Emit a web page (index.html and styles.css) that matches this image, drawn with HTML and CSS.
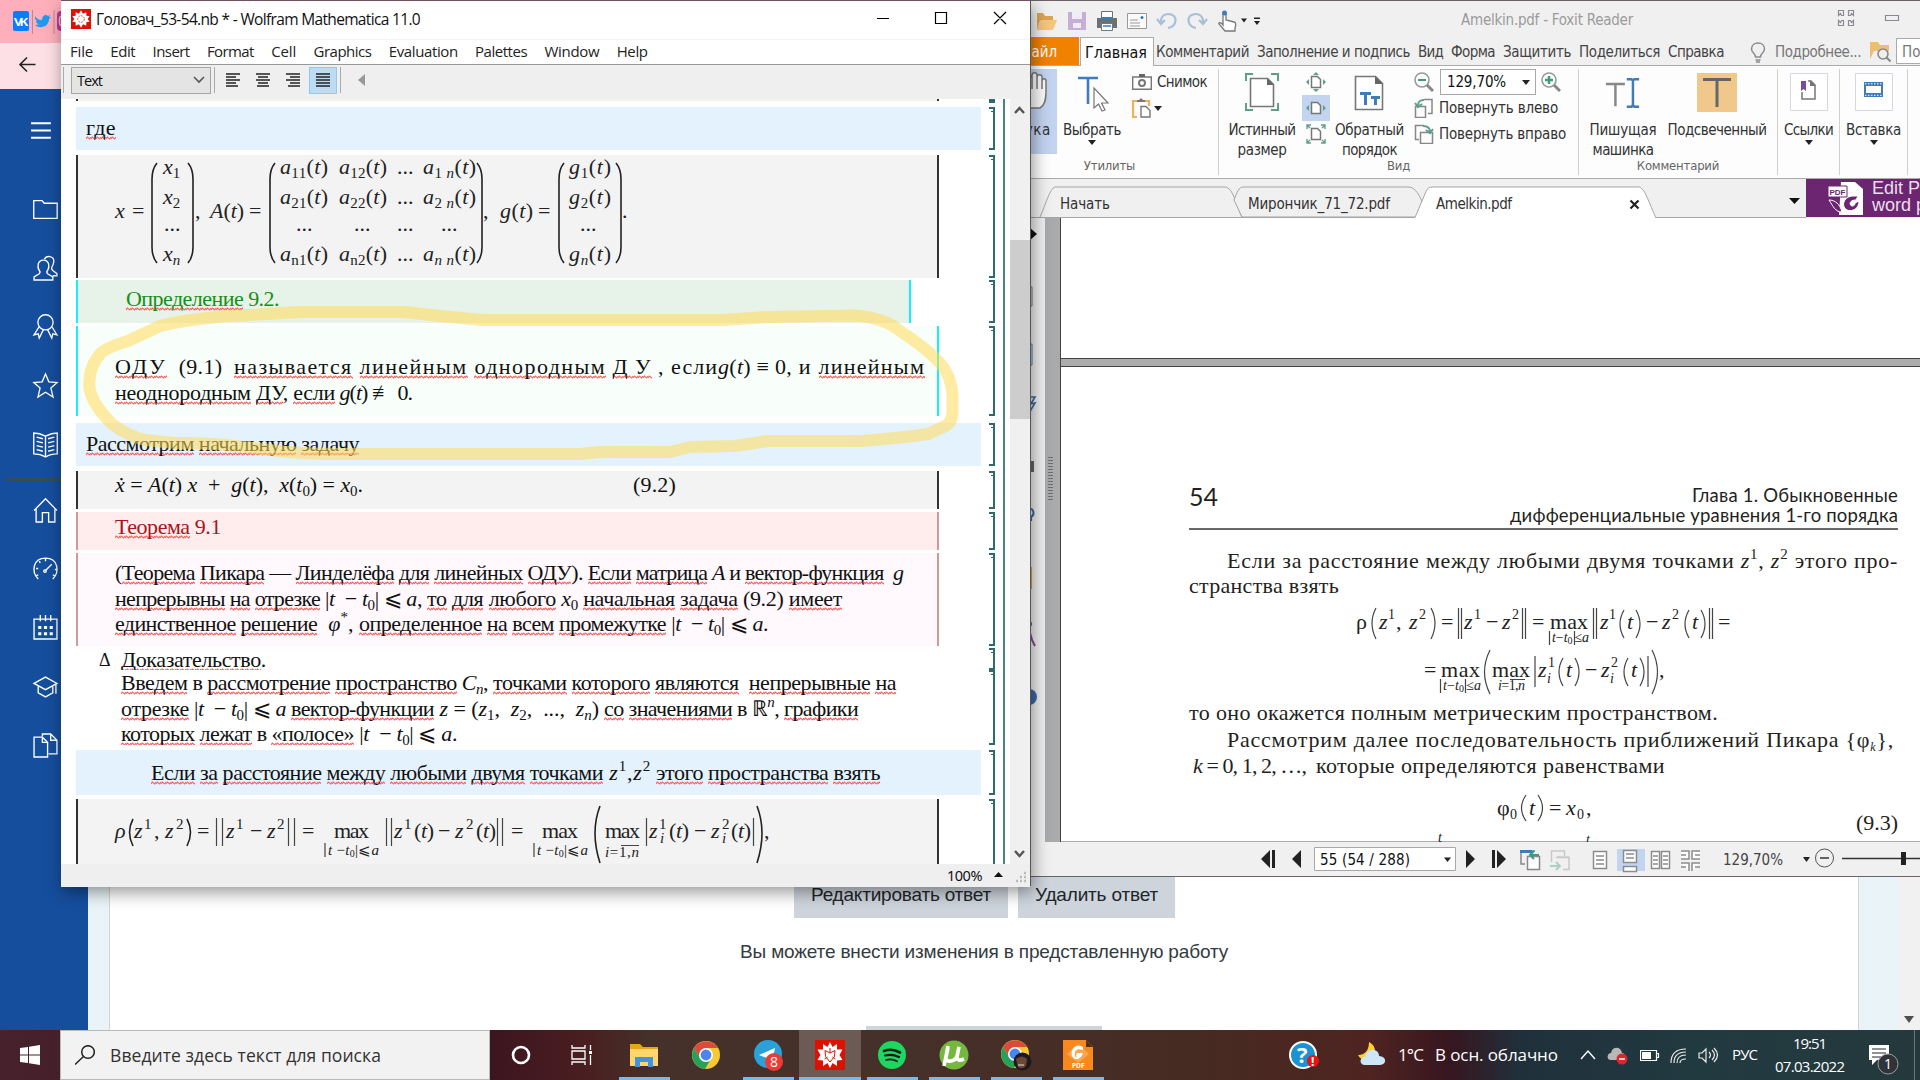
FILE: index.html
```html
<!DOCTYPE html>
<html lang="ru">
<head>
<meta charset="utf-8">
<title>Рабочий стол</title>
<link rel="stylesheet" href="styles.css">
</head>
<body>
<div class="desktop">

  <!-- Browser in the background -->
  <div class="browser">
    <div class="bookmarks">
      <svg width="61" height="43"><rect x="13" y="11" width="16" height="20" rx="2" fill="#0a7cff"/><text x="14" y="26" font-family="Lato" font-weight="900" font-size="12" fill="#fff" textLength="14">VK</text><path d="M32.500 10v24M54 10v24" stroke="#b98a92"/><path d="M35 25c3 0 4-1 4-1-2 0-3-2-3-3h1c-2-1-2-3-2-5 2 3 4 4 7 4 0-5 4-6 6-4l2-1-1 2 2 0-2 2c0 7-8 11-14 6z" fill="#1d9bf0"/><rect x="57" y="11" width="12" height="20" rx="4" fill="#c2379a"/><rect x="59.500" y="16" width="9" height="10" rx="3" fill="none" stroke="#fbc" stroke-width="1.500"/></svg>
    </div>
    <div class="addressbar"><svg width="61" height="45" fill="none" stroke="#222" stroke-width="1.600"><path d="M35.500 21.500H20M27 14.500l-7 7 7 7"/></svg></div>
    <div class="browser-body">
      <nav class="side">
        <svg class="hamb" viewBox="0 0 24 24"><path d="M2 5h19M2 12h19M2 19h19"/></svg>
        <svg viewBox="0 0 24 24"><path d="M.7 3.500h8l2 2.500h12.500v14.500H.7z"/></svg>
        <svg viewBox="0 0 24 24"><path d="M1 23v-3l5-3c1-1 1-2 0-3-2-3-2-10 4-10s6 7 4 10c-1 1-1 2 0 3l5 3v3zM11 3c2-4 9-3 9 2 0 2-1 4-2 6-.5 1 0 2 1 3l4 3v2h-4"/></svg>
        <svg viewBox="0 0 24 24"><circle cx="12" cy="8" r="7.300"/><path d="M6 12l-5 8 4-1 1 4 4-8M18 12l5 8-4-1-1 4-4-8"/></svg>
        <svg viewBox="0 0 24 24"><path d="M12 1l3.200 7.500 8 .7-6 5.300 2 8.500-7.200-4.500-7.200 4.500 2-8.500-6-5.300 8-.7z"/></svg>
        <svg viewBox="0 0 24 24"><path d="M12 4C8 2 4 1 .7 1v20c4 0 8 1 11.300 3 3.300-2 7.300-3 11.300-3V1C20 1 16 2 12 4v20M3.500 5l6 1.500M3.500 9l6 1.500M3.500 13l6 1.500M3.500 17l6 1.500M20.500 5l-6 1.500M20.500 9l-6 1.500M20.500 13l-6 1.500M20.500 17l-6 1.500"/></svg>
        <i class="rule"></i>
        <svg viewBox="0 0 24 24"><path d="M1 12L12 .8 23 12M3 10.500V23h6v-9h6v9h6V10.500"/></svg>
        <svg viewBox="0 0 24 24"><path d="M5 22C-2 15 0 2 12 2s14 13 7 20M12 14l6-6M3 12h2M6 5l1 1.500M12 2v3M21 13h2M5 18l-2 1M19 18l2 1"/><circle cx="11.500" cy="14.500" r="1.200"/></svg>
        <svg viewBox="0 0 24 24"><path d="M1 4h22v19H1zM7 0v6M12 0v6M17 0v6"/><path d="M5 12h3M10.500 12h3M16 12h3M5 18h3M10.500 18h3M16 18h3" stroke-width="3"/></svg>
        <svg viewBox="0 0 24 24"><path d="M1 9l11-6 11 6-11 6zM5 12v6l7 4 7-4v-6M22 10v9"/></svg>
        <svg viewBox="0 0 24 24"><path d="M1 4h8l5 5v14H1zM9 4v5h5M9 3V1h8l6 6v13h-8M17 1v6h6"/></svg>
      </nav>
      <div class="page">
        <div class="buttons"><span><b data-w="180">Редактировать ответ</b></span><span><b data-w="123">Удалить ответ</b></span></div>
        <p class="note"><b data-w="488">Вы можете внести изменения в представленную работу</b></p>
        <div class="lower-button"></div>
      </div>
      <div class="vscroll"><svg width="21" height="20"><path d="M5 6h10l-5 7z" fill="#505050"/></svg></div>
    </div>
  </div>

  <!-- Foxit Reader -->
  <section class="foxit">
    <header class="fx-title">
      <svg width="240" height="37" viewBox="1030 0 240 37">
        <path d="M1037 30V13h6l2 3h8v5l-13 0z" fill="#dca552"/><path d="M1037 30l4-10h16l-4 10z" fill="#f5c67e"/>
        <path d="M1068 12h18v18h-18z" fill="#c7aed6"/><path d="M1072 12h10v7h-10zM1073 23h8v5h-8z" fill="#f0ecf3"/>
        <path d="M1097 18h20v10h-20z" fill="#6d6f72"/><path d="M1101.500 11.500h11v8h-11z" fill="#fff" stroke="#6d6f72"/><path d="M1101 17h12v3h-12z" fill="#3f7cb8"/><path d="M1101.500 23.500h11v7h-11z" fill="#fff" stroke="#777"/><path d="M1103 26h8" stroke="#3f7cb8" stroke-width="1.500"/>
        <path d="M1127.500 13.500h19v15h-19z" fill="#fafafa" stroke="#999"/><path d="M1130 20h8M1130 23h10M1130 26h10" stroke="#999"/><circle cx="1142" cy="17.500" r="1.500" fill="#37b"/>
        <path d="M1168 28c9-1 11-14 0-14-5 0-7 4-7 8M1157 19l4 5 4-4M1196 28c-9-1-11-14 0-14 5 0 7 4 7 8M1207 19l-4 5-4-4" fill="none" stroke="#a9bfd9" stroke-width="2.200"/>
        <path d="M1223 25V14c0-2 3-2 3 0v6l8 2c2 0 2 3 1 6v3h-10l-6-7c-1-2 2-2 4 1z" fill="#fff" stroke="#777" stroke-width="1.300"/><circle cx="1224.500" cy="13" r="2.500" fill="#3f7cb8"/>
        <path d="M1241 18.500h6l-3 4zM1254 21h6l-3 4zM1254 17.500h6v1.500h-6z" fill="#222"/>
      </svg>
      <b class="fx-name" data-w="172">Amelkin.pdf - Foxit Reader</b>
      <svg class="fx-ctl" width="83" height="37" viewBox="1837 0 83 37" fill="none" stroke="#8a8a92" stroke-width="1.200"><path d="M1838.500 10.500h5v5h-2l-1-2-2 2zM1848.500 10.500h5v5l-2-2-1 2h-2zM1838.500 20.500l2 2 1-2h2v5h-5zM1848.500 20.500h2l1 2 2-2v5h-5zM1885.500 15.500h13v5h-13z"/></svg>
    </header>
    <nav class="fx-menu">
      <span class="file"><b data-w="37">Файл</b></span><span class="home"><b data-w="62">Главная</b></span>
      <span class="items"><b data-w="93">Комментарий</b><b data-w="153">Заполнение и подпись</b><b data-w="25">Вид</b><b data-w="44">Форма</b><b data-w="68">Защитить</b><b data-w="81">Поделиться</b><b data-w="56">Справка</b></span>
      <svg class="bulb" width="17" height="21" fill="none" stroke="#8a8a8a" stroke-width="1.500"><path d="M5.500 15c0-4-4-4-4-8 0-8 13-8 13 0 0 4-4 4-4 8zM5.500 18h5M6 20h4"/></svg>
      <b class="grey" data-w="86">Подробнее...</b>
      <svg class="find" width="21" height="20"><path d="M0 17V0h8l2 3h9v6H4z" fill="#edbd75"/><circle cx="13" cy="12" r="5" fill="#eee" stroke="#888" stroke-width="1.600"/><path d="M16.500 15.500l4 4" stroke="#888" stroke-width="2"/></svg>
      <span class="searchbox">Поиск</span>
    </nav>
    <div class="ribbon">
      <div class="grp g-tools">
        <div class="cmd hand"><svg viewBox="0 0 34 40"><path d="M8 22L2 18c-3-1-3 2-1 4l9 14h14c5-3 6-8 6-16V9c0-3-4-3-4 0v8V5c0-3-5-3-5 0v12V3c0-3-5-3-5 0v14V6c0-3-5-3-5 0v19" fill="#fafafa" stroke="#777" stroke-width="1.500"/></svg><b data-w="35">Рука</b></div>
        <div class="cmd sel"><svg viewBox="0 0 34 40"><path d="M3 6h20M13 6v26" fill="none" stroke="#3f7cb8" stroke-width="2.600"/><path d="M19 16v20l4.500-4 3.500 7 3-1-3.500-7H33z" fill="#fff" stroke="#777" stroke-width="1.200"/></svg><b data-w="58">Выбрать</b><i class="tri"></i></div>
        <div class="stack snap"><div><svg width="20" height="16" viewBox="0 0 20 16"><path d="M.7 3h18.600v12.300H.7z" fill="#fff" stroke="#777" stroke-width="1.400"/><path d="M7 0h6v3H7z" fill="#666"/><circle cx="10" cy="9" r="3" fill="none" stroke="#777" stroke-width="2"/></svg><b data-w="50">Снимок</b></div><div class="paste"><svg width="20" height="20"><path d="M5 19H1V3h16v5" fill="none" stroke="#eeb05b" stroke-width="2.200"/><path d="M5 4V2h2l2-2 2 2h2v2z" fill="#777"/><path d="M9 8.500h5l4 4V19H9z" fill="#fff" stroke="#777" stroke-width="1.400"/></svg><i class="tri"></i></div></div>
        <em>Утилиты</em>
      </div>
      <div class="grp g-view">
        <div class="cmd real"><svg viewBox="0 0 34 40"><path d="M1 9V2h7M26 2h7v7M33 31v7h-7M8 38H1v-7" fill="none" stroke="#5da089" stroke-width="2"/><path d="M5.500 6.500h17l6 6v22h-23z" fill="#fff" stroke="#777" stroke-width="1.600"/><path d="M22 6v7h7z" fill="#666"/></svg><b data-w="67">Истинный</b><b data-w="49">размер</b></div>
        <div class="stack fits">
          <div><svg width="20" height="20" fill="none"><path d="M5.500 4.500h6l3 3v8h-9z" fill="#fff" stroke="#777" stroke-width="1.500"/><path d="M7 3l3-3 3 3zM7 17l3 3 3-3zM3 7l-3 3 3 3zM17 7l3 3-3 3z" fill="#5da089"/></svg></div>
          <div class="on"><svg width="20" height="20" fill="none"><path d="M5.500 4.500h6l3 3v8h-9z" fill="#fff" stroke="#777" stroke-width="1.500"/><path d="M3 7l-3 3 3 3zM17 7l3 3-3 3z" fill="#5da089"/></svg></div>
          <div><svg width="20" height="20" fill="none"><path d="M5.500 4.500h6l3 3v8h-9z" fill="#fff" stroke="#777" stroke-width="1.500"/><path d="M1 5V1h4M1 1l3 3M15 1h4v4M19 1l-3 3M1 15v4h4M1 19l3-3M15 19h4v-4M19 19l-3-3" stroke="#5da089" stroke-width="1.400"/></svg></div>
        </div>
        <div class="cmd rev"><svg viewBox="0 0 34 40"><path d="M3.500 4.500h20l7 7v26h-27z" fill="#fff" stroke="#777" stroke-width="1.600"/><path d="M23 4v8h8z" fill="#666"/><path d="M8 21.500h11M13.500 21v12M19 25.500h9M23.500 25v8" stroke="#3f7cb8" stroke-width="3"/></svg><b data-w="69">Обратный</b><b data-w="55">порядок</b></div>
        <div class="stack zooms">
          <div><svg width="20" height="20" fill="none"><circle cx="8" cy="8" r="7" stroke="#999" stroke-width="1.600"/><path d="M13 13l6 6" stroke="#888" stroke-width="3"/><path d="M4 8h8" stroke="#3f9b78" stroke-width="2"/></svg><span class="combo"><b data-w="59">129,70%</b><i class="tri"></i></span><svg width="20" height="20" fill="none"><circle cx="8" cy="8" r="7" stroke="#999" stroke-width="1.600"/><path d="M13 13l6 6" stroke="#888" stroke-width="3"/><path d="M4 8h8M8 4v8" stroke="#3f9b78" stroke-width="2.500"/></svg></div>
          <div><svg width="20" height="20" fill="none"><path d="M10 1.500h8v14h-4M1.500 8.500h10v11h-10z" stroke="#888" stroke-width="1.500"/><path d="M10 2C5 2 4 4 4 8M1 5l3 4 4-3" stroke="#5da089" stroke-width="2"/></svg><b data-w="119">Повернуть влево</b></div>
          <div><svg width="20" height="20" fill="none"><path d="M10 1.500H1.500v14H5M6.500 8.500h12v11h-12z" stroke="#888" stroke-width="1.500"/><path d="M9 2c5 0 7 2 7 6M12 6l4 3 3-4" stroke="#5da089" stroke-width="2"/></svg><b data-w="127">Повернуть вправо</b></div>
        </div>
        <em>Вид</em>
      </div>
      <div class="grp g-comment">
        <div class="cmd type"><svg viewBox="0 0 38 40"><path d="M1 11.500h20M11 11v24" stroke="#888" stroke-width="2.600"/><path d="M23 6.500h5l1.500 1.500 1.500-1.500h5M23 35.500h5l1.500-1.500 1.500 1.500h5M29.500 7v28" fill="none" stroke="#3f7cb8" stroke-width="2.600"/></svg><b data-w="67">Пишущая</b><b data-w="61">машинка</b></div>
        <div class="cmd mark"><svg viewBox="0 0 40 40"><path d="M0 1h40v39H0z" fill="#f1c88c"/><path d="M6 7.500h28M20 7v28" stroke="#666" stroke-width="3"/></svg><b data-w="99">Подсвеченный</b></div>
        <em>Комментарий</em>
      </div>
      <div class="grp g-links"><div class="cmd"><svg viewBox="0 0 38 40"><path d="M.5 1.500h37v37H.5z" fill="#fff" stroke="#d3d8e2"/><path d="M11 9h5v10l-2.500-2-2.500 2z" fill="#7a4a9c"/><path d="M18 9h3l4 4v14H12v-7" fill="none" stroke="#777" stroke-width="1.500"/><path d="M20 8v6h6z" fill="#777"/></svg><b data-w="49">Ссылки</b><i class="tri"></i></div></div>
      <div class="grp g-insert"><div class="cmd"><svg viewBox="0 0 38 40"><path d="M.5 1.500h37v37H.5z" fill="#fff" stroke="#d3d8e2"/><path d="M9 10h19v15H9z" fill="#3f7cb8"/><path d="M11 14h15v7H11z" fill="#fff"/><path d="M10 11.800h17M10 23.300h17" stroke="#fff" stroke-dasharray="1.500 1.500"/></svg><b data-w="55">Вставка</b><i class="tri"></i></div></div>
    </div>
    <div class="doctabs">
      <svg width="806" height="39" viewBox="1000 179 806 39">
        <g fill="#f0f0f0" stroke="#a5a5a5"><path d="M1040 217c5-11 10-29 15-30h170c8 0 12 20 17 30"/><path d="M1234 200c3-8 5-13 9-13h166c6 0 11 9 14 17l-5 13h-176z"/><path d="M1000 217.500h806"/><path d="M1415 217.500l11-26c1-3 3-4.500 7-4.500h206c6 0 13 24 17 30.500" fill="#fff"/></g>
        <path d="M1415.500 217.500h239" stroke="#fff"/>
        <g font-size="15" fill="#333"><text x="1060" y="209" textLength="50">Начать</text><text x="1248" y="209" textLength="142">Мирончик_71_72.pdf</text><text x="1436" y="209" textLength="76">Amelkin.pdf</text></g>
        <path d="M1630.500 200.500l8 8M1638.500 200.500l-8 8" stroke="#222" stroke-width="2.200"/><path d="M1789 198h11l-5.500 6z" fill="#111"/>
      </svg>
      <div class="ad"><svg width="36" height="36" viewBox="0 0 36 36"><path d="M14 2h14l8 7v26H12z" fill="#fff"/><path d="M1 6h19v11H1z" fill="#fff" stroke="#6c2570"/><text x="2.500" y="14.500" font-size="8" font-weight="700" fill="#6c2570" textLength="16">PDF</text><path d="M2 20c6 0 11 4 13 12-7 0-9-6-13-12zM20 30c-6-3-4-13 5-14l6 0-2 4c-7 0-7 5-4 6 2 0 3-1 3-3l4-2c0 8-7 11-12 9z" fill="#6c2570" stroke="#fff"/></svg><span>Edit PDF<br>word pro</span></div>
    </div>
    <div class="docview">
      <div class="navpanel"><svg width="45" height="624" viewBox="1000 218 45 624"><path d="M1029 227l8 7-8 7z" fill="#111"/><path d="M1022 287h10v19h-10z" fill="none" stroke="#777"/><path d="M1022 344h10v21h-10z" fill="none" stroke="#4a7ab0"/><path d="M1026 397h9l-6 10M1026 405l9-2-6 10" fill="none" stroke="#3b6aa5" stroke-width="1.600"/><path d="M1022 461h12v11h-4l-3 5z" fill="#666"/><path d="M1028 509c6-2 7 6 3 8v4" fill="none" stroke="#3b6aa5" stroke-width="2"/><path d="M1022 567h10v22h-10z" fill="#dba64e"/><circle cx="1029" cy="624" r="3" fill="#3b6aa5"/><path d="M1028 640l2-7 2 7 3 6M1029 642l-2 4" stroke="#7a4a9c" fill="none" stroke-width="2"/><circle cx="1029" cy="697" r="8" fill="#3b6aa5"/></svg></div>
      <div class="gutter"><i></i></div>
      <div class="sheets">
        <div class="sheet first"></div>
        <article class="sheet">
          <header><span class="num">54</span><span class="chap"><b data-w="206">Глава 1. Обыкновенные</b><br><b data-w="388">дифференциальные уравнения 1-го порядка</b></span></header>
          <p class="l1"><b data-w="671">Если за расстояние между любыми двумя точками <i>z</i><sup>1</sup>, <i>z</i><sup>2</sup> этого про-</b></p>
          <p class="l2"><b data-w="150">странства взять</b></p>
          <svg class="eq" width="709" height="104" viewBox="1189 601 709 104">
            <g class="m"><text x="1356" y="630">ρ</text><text x="1379" y="630" class="i">z</text><text x="1396" y="630">,</text><text x="1409" y="630" class="i">z</text><text x="1441" y="630">=</text><text x="1464" y="630" class="i">z</text><text x="1486" y="630">−</text><text x="1502" y="630" class="i">z</text><text x="1532" y="630">=</text><text x="1550" y="630" textLength="38">max</text><text x="1600" y="630" class="i">z</text><text x="1627" y="630" class="i">t</text><text x="1646" y="630">−</text><text x="1662" y="630" class="i">z</text><text x="1692" y="630" class="i">t</text><text x="1718" y="630">=</text>
            <text x="1424" y="678">=</text><text x="1441" y="678" textLength="39">max</text><text x="1492" y="678" textLength="38">max</text><text x="1538" y="678" class="i">z</text><text x="1566" y="678" class="i">t</text><text x="1585" y="678">−</text><text x="1601" y="678" class="i">z</text><text x="1631" y="678" class="i">t</text><text x="1659" y="678">,</text></g>
            <g class="x"><text x="1388" y="620">1</text><text x="1419" y="620">2</text><text x="1474" y="620">1</text><text x="1512" y="620">2</text><text x="1609" y="620">1</text><text x="1672" y="620">2</text><text x="1548" y="668">1</text><text x="1611" y="668">2</text><text x="1547" y="684" class="i">i</text><text x="1610" y="684" class="i">i</text>
            <text x="1552" y="643" textLength="37"><tspan class="i">t</tspan>−<tspan class="i">t</tspan><tspan class="xx" dy="2">0</tspan><tspan dy="-2" dx="2">≤</tspan><tspan class="i">a</tspan></text><text x="1443" y="691" textLength="38"><tspan class="i">t</tspan>−<tspan class="i">t</tspan><tspan class="xx" dy="2">0</tspan><tspan dy="-2" dx="2">≤</tspan><tspan class="i">a</tspan></text><text x="1498" y="691" textLength="27"><tspan class="i">i</tspan>=1,<tspan class="i">n</tspan></text></g>
            <path class="bar" d="M1376 609q-8 15 0 31M1431 609q8 15 0 31M1458.500 609v31M1461.500 609v31M1522.500 609v31M1525.500 609v31M1593.500 609v31M1596.500 609v31M1624 611q-8 14 0 28M1636 611q8 14 0 28M1689 611q-8 14 0 28M1701 611q8 14 0 28M1709.500 609v31M1712.500 609v31M1549.500 632v14M1574.500 632v14M1440.500 680v14M1465.500 680v14M1490 651q-11 22 0 44M1652 651q11 22 0 44M1535 657v31M1648 657v31M1563 659q-8 14 0 28M1575 659q8 14 0 28M1628 659q-8 14 0 28M1640 659q8 14 0 28M1510 680.500h15"/>
          </svg>
          <p class="l3"><b data-w="529">то оно окажется полным метрическим пространством.</b></p>
          <p class="l4"><b data-w="667">Рассмотрим далее последовательность приближений Пикара {φ<sub><i>k</i></sub>},</b></p>
          <p class="l5"><b data-w="113"><i>k</i> = 0, 1, 2, …,</b><b data-w="349">которые определяются равенствами</b></p>
          <svg class="eq last" width="709" height="52" viewBox="1189 792 709 52"><g class="m"><text x="1497" y="816">φ</text><text x="1529" y="816" class="i">t</text><text x="1549" y="816">=</text><text x="1566" y="816" class="i">x</text><text x="1586" y="816">,</text><text x="1856" y="831" textLength="42">(9.3)</text></g><g class="x"><text x="1510" y="820">0</text><text x="1577" y="820">0</text><text x="1438" y="843" class="i">t</text><text x="1586" y="845" class="i">t</text></g><path class="bar" d="M1526 796q-9 13 0 26M1538 796q9 13 0 26"/></svg>
        </article>
      </div>
    </div>
    <footer class="fx-foot">
      <svg width="920" height="34" viewBox="1000 842 920 34">
        <g fill="#222"><path d="M1270 850v18l-9-9zM1272 850h3v18h-3zM1301 850v18l-9-9zM1466 850v18l9-9zM1492 850h3v18h-3zM1497 850v18l9-9z"/></g>
        <path d="M1314.500 847.500h141v23h-141z" fill="#fff" stroke="#a8a8a8"/><text x="1320" y="865" font-size="15" fill="#111" textLength="90">55 (54 / 288)</text><path d="M1444 857.500h7l-3.500 4.500z" fill="#222"/>
        <g fill="none" stroke="#888" stroke-width="1.500"><path d="M1525 864h-4v-13h14" /><path d="M1527.500 856.500h12v13h-12z" fill="#fff"/><path d="M1520 851.500h12" stroke="#3f7cb8" stroke-width="3"/><path d="M1539 855h-8M1534 851l-4 4 4 4" stroke="#3f9b78" stroke-width="2"/></g>
        <g fill="none" stroke="#c8c8c8" stroke-width="1.500"><path d="M1551.500 862v-11h13v5M1556 857.500h13v12h-6M1557 857h12" /><path d="M1550 866h9M1556 862l4 4-4 4" stroke="#acd0c4" stroke-width="2"/></g>
        <path d="M1617 849h28v22h-28z" fill="#c3d4f1"/>
        <g fill="#fff" stroke="#8c8c8c" stroke-width="1.500"><path d="M1593.500 851.500h13v17h-13zM1623.500 850.500h13v12h-13zM1623.500 866.500h13v5h-13zM1651.500 851.500h8v17h-8zM1661.500 851.500h8v17h-8z"/><path d="M1596 856h8M1596 860h8M1596 864h8M1626 854h8M1626 858h8M1653 856h5M1653 860h5M1653 864h5M1663 856h5M1663 860h5M1663 864h5M1681 851h8v8h-8M1700 851h-8v8h8M1681 863h8v8M1700 863h-8v8M1681 855h5M1700 855h-5M1681 867h5M1700 867h-5"/></g>
        <text x="1723" y="865" font-size="15" fill="#444" textLength="60">129,70%</text><path d="M1803 857h7l-3.500 5z" fill="#222"/><circle cx="1824.500" cy="858" r="9" fill="none" stroke="#555"/><path d="M1820 858h9" stroke="#333" stroke-width="1.500"/><path d="M1842 858.500h78" stroke="#333" stroke-width="1.500"/><path d="M1901 852h5v13h-5z" fill="#222"/>
      </svg>
    </footer>
  </section>

  <!-- Wolfram Mathematica -->
  <section class="wolfram">
    <header class="wf-title">
      <svg width="20" height="20" viewBox="0 0 30 30"><path d="M0 0h30v30H0z" fill="#dd1100"/><path d="M15 2l3 5 5-2 0 5 5 1-3 4 3 4-5 1 0 5-5-2-3 5-3-5-5 2 0-5-5-1 3-4-3-4 5-1 0-5 5 2z" fill="#fff"/><circle cx="15" cy="15" r="5" fill="none" stroke="#dd1100" stroke-dasharray="3 1.500"/></svg>
      <b data-w="324">Головач_53-54.nb * - Wolfram Mathematica 11.0</b>
      <svg class="winctl" width="148" height="38" viewBox="877 1 148 38" fill="none" stroke="#000" stroke-width="1.200"><path d="M877 19.500h12M935.500 13.500h11v11h-11zM994 13l12 12M1006 13l-12 12"/></svg>
    </header>
    <nav class="wf-menu"><b data-w="23">File</b><b data-w="25">Edit</b><b data-w="37">Insert</b><b data-w="47">Format</b><b data-w="25">Cell</b><b data-w="58">Graphics</b><b data-w="69">Evaluation</b><b data-w="52">Palettes</b><b data-w="55">Window</b><b data-w="31">Help</b></nav>
    <div class="wf-tools">
      <i class="sep"></i><span class="style"><b data-w="25">Text</b><svg width="12" height="8" fill="none" stroke="#555" stroke-width="1.600"><path d="M1 1l5 5 5-5"/></svg></span><i class="sep"></i>
      <span class="al"><svg viewBox="0 0 14 15"><path d="M0 1h14M0 4h10M0 7h14M0 10h10M0 13h12"/></svg></span><span class="al"><svg viewBox="0 0 14 15"><path d="M0 1h14M2 4h10M0 7h14M2 10h10M1 13h12"/></svg></span><span class="al"><svg viewBox="0 0 14 15"><path d="M0 1h14M4 4h10M0 7h14M4 10h10M2 13h12"/></svg></span><span class="al on"><svg viewBox="0 0 14 15"><path d="M0 1h14M0 4h14M0 7h14M0 10h14M0 13h14"/></svg></span>
      <i class="sep"></i><svg class="left" width="8" height="12"><path d="M7 0v12L0 6z" fill="#999"/></svg>
    </div>
    <div class="nbwrap">
      <div class="notebook">
        <div class="row r0"><div class="cell ink"></div><i class="brk"></i></div>
        <div class="row r1"><div class="cell blue"><p><b data-w="30"><u>где</u></b></p></div><i class="brk"></i></div>
        <div class="row r2"><div class="cell ink">
          <svg class="mx" width="858" height="123" viewBox="78 155 858 123">
            <g class="m"><text x="115" y="218" class="i">x</text><text x="132" y="218">=</text><text x="195" y="218">,</text><text x="210" y="218" textLength="34"><tspan class="i">A</tspan>(<tspan class="i">t</tspan>)</text><text x="249" y="218">=</text><text x="483" y="218">,</text><text x="500" y="218" textLength="33"><tspan class="i">g</tspan>(<tspan class="i">t</tspan>)</text><text x="538" y="218">=</text><text x="622" y="218">.</text>
            <text x="163" y="174"><tspan class="i">x</tspan><tspan class="x" dy="4">1</tspan></text><text x="163" y="204"><tspan class="i">x</tspan><tspan class="x" dy="4">2</tspan></text><text x="164" y="231">...</text><text x="163" y="261"><tspan class="i">x</tspan><tspan class="x i" dy="4">n</tspan></text>
            <text x="280" y="174" textLength="48"><tspan class="i">a</tspan><tspan class="x" dy="4">11</tspan><tspan dy="-4">(</tspan><tspan class="i">t</tspan>)</text><text x="339" y="174" textLength="48"><tspan class="i">a</tspan><tspan class="x" dy="4">12</tspan><tspan dy="-4">(</tspan><tspan class="i">t</tspan>)</text><text x="397" y="174">...</text><text x="423" y="174" textLength="53"><tspan class="i">a</tspan><tspan class="x" dy="4">1 </tspan><tspan class="x i">n</tspan><tspan dy="-4">(</tspan><tspan class="i">t</tspan>)</text>
            <text x="280" y="204" textLength="48"><tspan class="i">a</tspan><tspan class="x" dy="4">21</tspan><tspan dy="-4">(</tspan><tspan class="i">t</tspan>)</text><text x="339" y="204" textLength="48"><tspan class="i">a</tspan><tspan class="x" dy="4">22</tspan><tspan dy="-4">(</tspan><tspan class="i">t</tspan>)</text><text x="397" y="204">...</text><text x="423" y="204" textLength="53"><tspan class="i">a</tspan><tspan class="x" dy="4">2 </tspan><tspan class="x i">n</tspan><tspan dy="-4">(</tspan><tspan class="i">t</tspan>)</text>
            <text x="296" y="231">...</text><text x="354" y="231">...</text><text x="397" y="231">...</text><text x="441" y="231">...</text>
            <text x="280" y="261" textLength="48"><tspan class="i">a</tspan><tspan class="x" dy="4">n1</tspan><tspan dy="-4">(</tspan><tspan class="i">t</tspan>)</text><text x="339" y="261" textLength="48"><tspan class="i">a</tspan><tspan class="x" dy="4">n2</tspan><tspan dy="-4">(</tspan><tspan class="i">t</tspan>)</text><text x="397" y="261">...</text><text x="423" y="261" textLength="53"><tspan class="i">a</tspan><tspan class="x i" dy="4">n n</tspan><tspan dy="-4">(</tspan><tspan class="i">t</tspan>)</text>
            <text x="569" y="174" textLength="42"><tspan class="i">g</tspan><tspan class="x" dy="4">1</tspan><tspan dy="-4">(</tspan><tspan class="i">t</tspan>)</text><text x="569" y="204" textLength="42"><tspan class="i">g</tspan><tspan class="x" dy="4">2</tspan><tspan dy="-4">(</tspan><tspan class="i">t</tspan>)</text><text x="580" y="231">...</text><text x="569" y="261" textLength="42"><tspan class="i">g</tspan><tspan class="x i" dy="4">n</tspan><tspan dy="-4">(</tspan><tspan class="i">t</tspan>)</text></g>
            <path class="par" d="M157 163q-5 6-5 16v68q0 10 5 16M188 163q5 6 5 16v68q0 10-5 16M275 163q-5 6-5 16v68q0 10 5 16M477 163q5 6 5 16v68q0 10-5 16M564 163q-5 6-5 16v68q0 10 5 16M616 163q5 6 5 16v68q0 10-5 16"/>
          </svg></div><i class="brk"></i></div>
        <div class="row r3"><div class="cell green"><p><b data-w="153"><u>Определение</u> 9.2.</b></p></div><i class="brk"></i></div>
        <div class="row r4"><div class="cell mint"><p><b data-w="52"><u>ОДУ</u></b><b data-w="67">  (9.1)  </b><b data-w="372"><u>называется</u> <u>линейным</u> <u>однородным</u></b><b data-w="65"> <u>Д У</u> , </b><b data-w="47">если</b><b data-w="74"><i>g</i>(<i>t</i>) ≡ 0,</b><b data-w="133"> и <u>линейным</u></b></p><p><b data-w="220"><u>неоднородным</u> <u>ДУ</u>, <u>если</u></b><b data-w="77"> <i>g</i>(<i>t</i>) ≢ 0.</b></p></div><i class="brk"></i></div>
        <div class="row r5"><div class="cell blue"><p><b data-w="273"><u>Рассмотрим</u> <u>начальную</u> <u>задачу</u></b></p></div><i class="brk"></i></div>
        <div class="row r6"><div class="cell ink"><p><b data-w="248"><i>ẋ</i> = <i>A</i>(<i>t</i>) <i>x</i>  +  <i>g</i>(<i>t</i>),  <i>x</i>(<i>t</i><sub>0</sub>) = <i>x</i><sub>0</sub>.</b><b class="eqno" data-w="43">(9.2)</b></p></div><i class="brk"></i></div>
        <div class="row r7"><div class="cell pink"><p><b data-w="106"><u>Теорема</u> 9.1</b></p></div><i class="brk"></i></div>
        <div class="row r8"><div class="cell rose"><p><b data-w="516">(<u>Теорема</u> <u>Пикара</u> — <u>Линделёфа</u> <u>для</u> <u>линейных</u> <u>ОДУ</u>). <u>Если</u></b><b data-w="272"> <u>матрица</u> <i>A</i> и <u>вектор-функция</u>  <i>g</i></b></p><p><b data-w="205"><u>непрерывны</u> <u>на</u> <u>отрезке</u></b><b data-w="107"> |<i>t</i>  − <i>t</i><sub>0</sub>| ⩽ <i>a</i>, </b><b data-w="415"><u>то</u> <u>для</u> <u>любого</u> <i>x</i><sub>0</sub> <u>начальная</u> <u>задача</u> (9.2) <u>имеет</u></b></p><p><b data-w="202"><u>единственное</u> <u>решение</u></b><b data-w="42">  <i>φ</i><sup>*</sup>, </b><b data-w="307"><u>определенное</u> <u>на</u> <u>всем</u> <u>промежутке</u></b><b data-w="102"> |<i>t</i>  − <i>t</i><sub>0</sub>| ⩽ <i>a</i>.</b></p></div><i class="brk"></i></div>
        <div class="row r9"><div class="cell plain"><p><span class="delta">Δ</span><b data-w="145"><u>Доказательство</u>.</b></p></div><i class="brk"></i></div>
        <div class="row r10"><div class="cell plain"><p><b data-w="367"><u>Введем</u> в <u>рассмотрение</u> <u>пространство</u> <i>C</i><sub><i>n</i></sub>,</b><b data-w="408"> <u>точками</u> <u>которого</u> <u>являются</u>  <u>непрерывные</u> <u>на</u></b></p><p><b data-w="68"><u>отрезке</u></b><b data-w="102"> |<i>t</i>  − <i>t</i><sub>0</sub>| ⩽ <i>a</i> </b><b data-w="143"><u>вектор-функции</u></b><b data-w="165"> <i>z</i> = (<i>z</i><sub>1</sub>,  <i>z</i><sub>2</sub>,  ...,  <i>z</i><sub><i>n</i></sub>)</b><b data-w="259"> <u>со</u> <u>значениями</u> в ℝ<sup><i>n</i></sup>, <u>графики</u></b></p><p><b data-w="233"><u>которых</u> <u>лежат</u> в <u>«полосе»</u></b><b data-w="103"> |<i>t</i>  − <i>t</i><sub>0</sub>| ⩽ <i>a</i>.</b></p></div><i class="brk"></i></div>
        <div class="row r11"><div class="cell blue"><p><b data-w="452"><u>Если</u> <u>за</u> <u>расстояние</u> <u>между</u> <u>любыми</u> <u>двумя</u> <u>точками</u></b><b data-w="48"> <i>z</i><sup>1</sup>,<i>z</i><sup>2</sup></b><b data-w="229"> <u>этого</u> <u>пространства</u> <u>взять</u></b></p></div><i class="brk"></i></div>
        <div class="row r12"><div class="cell ink">
          <svg class="mx" width="858" height="65" viewBox="78 799 858 65">
            <g class="m"><text x="115" y="838" class="i">ρ</text><text x="134" y="838" class="i">z</text><text x="154" y="838">,</text><text x="165" y="838" class="i">z</text><text x="197" y="838">=</text><text x="226" y="838" class="i">z</text><text x="250" y="838">−</text><text x="267" y="838" class="i">z</text><text x="302" y="838">=</text><text x="334" y="838" textLength="35">max</text><text x="394" y="838" class="i">z</text><text x="414" y="838" textLength="20">(<tspan class="i">t</tspan>)</text><text x="438" y="838">−</text><text x="455" y="838" class="i">z</text><text x="476" y="838" textLength="20">(<tspan class="i">t</tspan>)</text><text x="511" y="838">=</text><text x="542" y="838" textLength="36">max</text><text x="605" y="838" textLength="35">max</text><text x="649" y="838" class="i">z</text><text x="669" y="838" textLength="20">(<tspan class="i">t</tspan>)</text><text x="694" y="838">−</text><text x="711" y="838" class="i">z</text><text x="731" y="838" textLength="20">(<tspan class="i">t</tspan>)</text><text x="764" y="838">,</text></g>
            <g class="x"><text x="144" y="829">1</text><text x="176" y="829">2</text><text x="236" y="829">1</text><text x="277" y="829">2</text><text x="404" y="829">1</text><text x="466" y="829">2</text><text x="659" y="829">1</text><text x="722" y="829">2</text><text x="660" y="843" class="i">i</text><text x="722" y="843" class="i">i</text><text x="328" y="855" textLength="51"><tspan class="i">t</tspan> −<tspan class="i">t</tspan><tspan class="xx" dy="2">0</tspan><tspan dy="-2">|⩽</tspan><tspan class="i">a</tspan></text><text x="537" y="855" textLength="51"><tspan class="i">t</tspan> −<tspan class="i">t</tspan><tspan class="xx" dy="2">0</tspan><tspan dy="-2">|⩽</tspan><tspan class="i">a</tspan></text><text x="605" y="857" textLength="34"><tspan class="i">i</tspan>=1,<tspan class="i">n</tspan></text></g>
            <path class="par" d="M133 819q-7 13 0 27M187 819q7 13 0 27M600 806q-10 26 0 57M757 806q10 26 0 57"/><path class="bar" d="M216.500 818v28M222.500 818v28M288.500 818v28M294.500 818v28M386.500 818v28M391.500 818v28M497.500 818v28M502.500 818v28M646.500 818v28M753.500 818v28M325 843v14M534 843v14M621 845.500h18"/>
          </svg></div><i class="brk open"></i></div>
      </div>
      <div class="grpline"></div>
      <div class="wf-scroll"><svg width="19" height="22" fill="none" stroke="#555" stroke-width="2.400"><path d="M5 14l4.500-5 4.500 5"/></svg><i class="thumb"></i><svg width="19" height="22" fill="none" stroke="#555" stroke-width="2.400"><path d="M5 9l4.500 5 4.500-5"/></svg></div>
    </div>
    <footer class="wf-foot"><b data-w="35">100%</b><svg width="42" height="21"><path d="M6 13h9l-4.500-5z" fill="#111"/><path d="M28 17h2M32 17h2M36 17h2M32 13h2M36 13h2M36 9h2" stroke="#bbb" stroke-width="2.500"/></svg></footer>
  </section>

  <!-- Highlighter stroke drawn over the notebook -->
  <svg class="marker" width="1000" height="500"><path d="M298 312H362L404 312L440 316L482 320H722L770 317L855 315.500Q885 318 900 331Q925 347 940 363Q951 375 952.500 395V412Q952 424 943 427L928 434Q900 438 860 441H768L735 446L690 447L670 452H600L580 454H338Q300 454 270 450Q210 442 175 443L145 440Q128 436 112 424Q92 404 89.500 388Q88 366 102 352Q108 347 128 341L160 326Q175 322 200 319L225 316Q260 315 298 312Z"/></svg>

  <!-- Taskbar -->
  <footer class="taskbar">
    <div class="start"><svg width="20" height="20" fill="#fff"><path d="M0 3l8-1v7.500H0zM9 1.800L20 0v9.500H9zM0 10.500h8V18l-8-1zM9 10.500h11V20L9 18.300z"/></svg></div>
    <div class="search"><svg width="20" height="20" fill="none" stroke="#222" stroke-width="1.500"><circle cx="13" cy="7" r="6.300"/><path d="M8.500 11.500L0 19.500"/></svg><b data-w="271">Введите здесь текст для поиска</b></div>
    <div class="apps">
      <span class="cort"><svg width="20" height="20" fill="none" stroke="#fff" stroke-width="2.600"><circle cx="10" cy="10" r="8"/></svg></span>
      <span><svg width="22" height="20" fill="none" stroke="#fff" stroke-width="1.300"><path d="M1 0v3h13V0M1 20v-3h13v3M1 6h13v8H1zM19.500 0v5M19.500 10v10"/><path d="M18 6h3v3h-3z" fill="#fff" stroke="none"/></svg></span>
      <span class="run"><svg width="28" height="26"><path d="M0 24V2h10l3 3h15v19z" fill="#e7a614"/><path d="M0 24V7h28v17z" fill="#ffd669"/><path d="M5 25V15h18v10h-5v-5h-8v5z" fill="#3f96dc"/></svg></span>
      <span><svg width="28" height="28" viewBox="0 0 28 28"><circle cx="14" cy="14" r="14" fill="#f9c931"/><path d="M2 7A14 14 0 0 1 26 7H14L8 17z" fill="#db4a3c"/><path d="M2 7A14 14 0 0 0 13 28L19 18 8 17z" fill="#24a15b"/><circle cx="14" cy="14" r="6.200" fill="#4b86ee" stroke="#fff" stroke-width="1.600"/></svg></span>
      <span class="run"><svg width="32" height="32" viewBox="0 0 32 32"><circle cx="16" cy="15" r="14" fill="#2ba1da"/><path d="M7 16l16-7-3 14-5-4z" fill="#fff"/><circle cx="22" cy="23" r="9" fill="#ee3b34"/><text x="18" y="28" font-size="14" fill="#fff">8</text></svg></span>
      <span class="run active"><svg width="30" height="30" viewBox="0 0 30 30"><path d="M0 0h30v30H0z" fill="#dd1100"/><path d="M15 2l2.500 5L22 4v5.500l5.500 0L24.500 15l3 5-5.500.5V26l-4.500-3L15 28l-2.500-5L8 26v-5.500L2.500 20l3-5-3-5.500H8V4l4.500 3z" fill="#fff"/><path d="M10 10.500l5 2.500 5-2.500-.5 6-4.500 5.500-4.500-5.500zM15 8v5M9.500 19l3-2M20.500 19l-3-2" fill="none" stroke="#dd1100"/></svg></span>
      <span class="run"><svg width="28" height="28" fill="none" stroke="#1a1a1a" stroke-linecap="round"><circle cx="14" cy="14" r="14" fill="#1ed760" stroke="none"/><path d="M6 10q8-3 16 1.500" stroke-width="2.600"/><path d="M7 14.500q7-2 14 1.500" stroke-width="2.200"/><path d="M8 19q6-1.500 11 1.200" stroke-width="1.800"/></svg></span>
      <span class="run"><svg width="30" height="30"><circle cx="15" cy="15" r="14.500" fill="#74b83f"/><path d="M9 6l-4 20M9 8l-2 9q0 5 5 4 5-1 6-5l2-9-2 10q0 5 7 2" fill="none" stroke="#fff" stroke-width="3.600"/></svg></span>
      <span class="run"><svg width="32" height="32" viewBox="0 0 32 32"><g transform="translate(1 1)"><circle cx="14" cy="14" r="14" fill="#f9c931"/><path d="M2 7A14 14 0 0 1 26 7H14L8 17z" fill="#db4a3c"/><path d="M2 7A14 14 0 0 0 13 28L19 18 8 17z" fill="#24a15b"/><circle cx="14" cy="14" r="6.200" fill="#4b86ee" stroke="#fff" stroke-width="1.600"/></g><circle cx="22.500" cy="22.500" r="9" fill="#1d1a1e"/><path d="M16 20q6-5 11 0l-1 7q-4 4-8 1z" fill="#6e4635"/><path d="M18 26h6" stroke="#ddd"/></svg></span>
      <span class="run"><svg width="30" height="30"><path d="M0 0h23l7 7v23H0z" fill="#f7891f"/><path d="M23 0v7h7z" fill="#552e10"/><path d="M15 4l11 10-11 9L4 14z" fill="#faa850"/><path d="M20 7c-7-4-13 2-11 9 2 5 9 4 11-3h-6l-1 3c2 1 0 3-1 0-1-5 2-8 8-6z" fill="#fff"/><text x="9" y="28" font-size="6.500" font-weight="700" fill="#fff">PDF</text></svg></span>
    </div>
    <svg class="tray" width="360" height="50" viewBox="1280 1030 360 50">
      <circle cx="1303" cy="1055" r="13" fill="#1b93d2" stroke="#fff" stroke-width="2"/><text x="1297" y="1063" font-size="22" font-weight="700" fill="#fff">?</text><circle cx="1313" cy="1061" r="6" fill="#e11"/><text x="1311" y="1066" font-size="12" font-weight="700" fill="#fff">!</text>
      <path d="M1369 1042c8 4 8 13 0 18-5 1-9-1-11-5 8 0 11-6 11-13z" fill="#ffcf33"/><path d="M1365 1065c-6 0-6-8 0-8 1-9 14-9 14-1 8 0 8 9 1 9z" fill="#cfe6fa"/>
      <g font-size="17" fill="#fff"><text x="1398" y="1061" textLength="26">1°C</text><text x="1435" y="1061" textLength="123">В осн. облачно</text></g>
      <path d="M1581 1059l7-8 7 8" fill="none" stroke="#fff" stroke-width="1.400"/><path d="M1611 1060c-5 0-4-7 0-7 1-7 10-7 11 0 4 0 4 7 0 7z" fill="#b8b8b8"/><circle cx="1622" cy="1059" r="5.500" fill="#e0242c"/><path d="M1619 1059h6" stroke="#fff" stroke-width="1.500"/>
    </svg>
    <svg class="tray" width="280" height="50" viewBox="1640 1030 280 50">
      <path d="M1640.500 1050.500h16v10h-16zM1657 1053.500h1.500v4h-1.500" fill="none" stroke="#fff" stroke-width="1.200"/><path d="M1642 1052h9v7h-9z" fill="#fff"/>
      <g fill="none" stroke="#e8e8e8" stroke-width="1.200"><path d="M1671 1063c0-9 5-14 15-14M1674 1063c0-7 4-11 12-11M1677 1063c0-5 3-8 9-8M1680 1063c0-2 2-4 6-4"/><path d="M1699 1053h3l4-4v13l-4-4h-3zM1709 1052q3 3 0 6M1712 1050q5 5 0 10M1714 1048q7 7 0 14"/></g>
      <g fill="#fff" font-size="15"><text x="1732" y="1060" textLength="26">РУС</text><text x="1793" y="1049" textLength="34">19:51</text><text x="1775" y="1072" textLength="70">07.03.2022</text></g>
      <path d="M1869 1045h20v15h-12l-5 5v-5h-3z" fill="#fff"/><path d="M1872 1049h14M1872 1053h14M1872 1057h9" stroke="#223" /><circle cx="1888" cy="1064" r="10" fill="#303438" stroke="#999"/><text x="1884" y="1069" font-size="14" fill="#fff">1</text><path d="M1914.500 1030v50" stroke="#687478"/>
    </svg>
  </footer>
</div>
<script src="fit.js"></script>
</body>
</html>
```
FILE: styles.css
```css
* { box-sizing: border-box; }
body { margin: 0; overflow: hidden; }
b { font-weight: inherit; white-space: pre; display: inline-block; }
p { margin: 0; }
svg { display: block; flex: none; }
.desktop { position: relative; width: 1920px; height: 1080px; overflow: hidden; font-family: "Noto Sans", "Open Sans", sans-serif; }

/* browser */
.browser { position: absolute; inset: 0 0 50px; display: flex; flex-direction: column; background: #fff; }
.bookmarks { height: 43px; background: #ffafbb; }
.addressbar { height: 46px; background: #fde0e6; }
.browser-body { flex: 1; display: flex; background: #eaf3f7; }
.side { width: 88px; background: #154e9d; padding: 29px 0 0 31px; display: flex; flex-direction: column; }
.side svg { width: 25px; height: 25px; margin: 0 0 33.700px 2px; fill: none; stroke: #fff; stroke-width: 1.300; overflow: visible; }
.side svg.hamb { margin: 0 0 54px -2px; stroke-width: 1.800; }
.side svg:nth-child(6) { margin-bottom: 21px; }
.side .rule { width: 55px; height: 3px; background: #3a4a58; margin: 0 0 17px -25px; }
.page { width: 1750px; margin-left: 21px; border: solid #ccd6dc; border-width: 0 1px; background: #fff; padding-top: 755px; font-family: "Liberation Sans", Arial, sans-serif; font-size: 19px; color: #343a40; }
.buttons { display: flex; gap: 10px; padding-left: 684px; }
.buttons span { height: 74px; background: #ced4dc; padding: 39px 17px 0; line-height: 24px; color: #212529; }
.note { padding: 22px 0 0 630px; line-height: 24px; }
.lower-button { width: 236px; height: 4px; background: #ced4dc; margin: 62px 0 0 756px; }
.vscroll { width: 21px; background: #f1f1f1; margin-left: auto; display: flex; align-items: flex-end; }

/* Foxit Reader */
.foxit { position: absolute; left: 1000px; top: 0; width: 920px; height: 877px; background: #f0f0f0; border-top: 1px solid #6b6166; border-bottom: 1px solid #6b6166; display: flex; flex-direction: column; font-family: "DejaVu Sans Condensed", "DejaVu Sans", sans-serif; font-stretch: condensed; font-size: 15px; color: #333; }
.fx-title { height: 36px; display: flex; padding-left: 30px; flex: none; }
.fx-title svg { margin-top: -1px; }
.fx-name { margin: 10px 0 0 191px; line-height: 18px; font-size: 15px; color: #9b9b9b; }
.fx-ctl { margin-left: auto; }
.fx-menu { height: 29px; flex: none; display: flex; border-bottom: 1px solid #ababab; line-height: 31px; color: #444; }
.file { width: 79px; background: #f08200; color: #fff; padding-left: 20px; }
.home { width: 74px; margin: 0 2px -1px 1px; border: 1px solid #ababab; border-bottom: 0; background: #fdfdfd; color: #111; font-size: 16px; padding-left: 4px; line-height: 30px; }
.items { display: flex; gap: 8px; }
.bulb { margin: 5px 8px 0 26px; }
.grey { color: #777; }
.find { margin: 5px 5px 0 9px; }
.searchbox { width: 24px; height: 26px; border: 1px solid #ababab; border-right: 0; background: #fff; overflow: hidden; padding-left: 5px; line-height: 26px; margin-top: 1px; color: #777; flex: none; }
.ribbon { height: 113px; flex: none; background: #fdfdfd; border-bottom: 1px solid #ababab; display: flex; padding-top: 3px; color: #333; }
.grp { display: flex; height: 106px; position: relative; border-right: 1px solid #d0d0d0; flex: none; }
.grp em { position: absolute; left: 0; right: 0; bottom: 0; text-align: center; font-style: normal; font-size: 13px; letter-spacing: -.2px; line-height: 18px; color: #666; }
.cmd { display: flex; flex-direction: column; align-items: center; line-height: 20px; padding-top: 3px; }
.cmd svg { width: 36px; height: 40px; margin-bottom: 8px; }
.tri { border: 4px solid transparent; border-top: 5px solid #222; border-bottom: 0; }
.g-tools { width: 219px; } .g-tools em { left: 1px; }
.hand { width: 57px; height: 85px; background: #c2d3f0; padding-left: 10px; }
.hand svg { margin-left: -2px; }
.sel { width: 70px; }
.stack { display: flex; flex-direction: column; }
.stack > div { height: 26px; display: flex; align-items: center; gap: 5px; }
.snap { padding-left: 5px; }
.snap .paste { gap: 2px; }
.g-view { width: 360px; }
.real { width: 83px; padding-left: 3px; }
.fits > div { width: 28px; justify-content: center; }
.fits .on { background: #c3d4f1; }
.rev { width: 79px; }
.rev svg { margin-left: -2px; }
.zooms { padding-left: 5px; }
.combo { width: 96px; height: 26px; margin-left: 1px; border: 1px solid #a8a8a8; background: #fff; display: flex; align-items: center; padding: 0 5px 0 6px; color: #111; justify-content: space-between; }
.g-comment { width: 199px; }
.type { width: 88px; } .mark { width: 100px; }
.mark svg { width: 40px; }
.g-links { width: 62px; justify-content: center; } .g-insert { width: 68px; justify-content: center; }
.g-links svg, .g-insert svg { width: 38px; }
.doctabs { height: 39px; flex: none; display: flex; }
.ad { width: 114px; height: 38px; background: #6c2570; display: flex; gap: 9px; padding: 1px 0 0 21px; overflow: hidden; font: 18px/17px "Liberation Sans", sans-serif; color: #eadfec; white-space: nowrap; }
.docview { height: 624px; flex: none; display: flex; }
.navpanel { width: 45px; background: #efefef; }
.gutter { width: 15px; background: #a9aaac; padding: 238px 0 0 3px; }
.gutter i { display: block; width: 5px; height: 44px; background: radial-gradient(circle, #555 .7px, transparent 1px) 0 0 / 2.500px 3px; }
.sheets { flex: 1; background: #adadad; border-left: 1px solid #444; overflow: hidden; }
.sheet { background: #fff; height: 475px; padding: 0 22px 0 128px; border-top: 1px solid #444; font: 22px/24px "Liberation Serif", serif; color: #231f20; }
.sheet.first { height: 141px; border-top: 0; border-bottom: 1px solid #444; margin-bottom: 7px; }
.sheet header { display: flex; justify-content: space-between; height: 163px; padding-top: 118px; border-bottom: 2px solid #6a666a; font: 18.500px/20px Lato, sans-serif; }
.num { font-size: 25px; line-height: 22px; }
.chap { text-align: right; }
.sheet sup, .sheet sub, .notebook sup, .notebook sub { font-size: 15px; line-height: 0; }
.sheet sup { vertical-align: 9px; } .sheet sub { vertical-align: -4px; font-size: 12px; }
.l1 { padding: 19px 0 0 38px; } .l2 { padding-top: 1px; }
.l3 { margin-top: -3px; }
.l4 { padding-left: 38px; margin-top: 3px; }
.l5 { padding: 2px 0 0 4px; display: flex; gap: 10px; }
.l2 + .eq { margin-top: 2px; }
.eq.last { margin-top: 13px; }
.m { font: 22px "Liberation Serif", serif; fill: #222; }
.x { font-size: 15px; font-family: "Liberation Serif", serif; fill: #222; }
.eq .x { font-size: 14px; }
.xx { font-size: 10px; }
.i { font-style: italic; }
.bar { fill: none; stroke: #444; stroke-width: 1.200; }
.par { fill: none; stroke: #222; stroke-width: 1.600; }
.fx-foot { height: 34px; }

/* Mathematica */
.wolfram { position: absolute; left: 61px; top: 0; width: 970px; height: 886px; background: #fff; border-top: 1px solid #754f5a; border-bottom: 1px solid #555; border-right: 1px solid #555; display: flex; flex-direction: column; box-shadow: 2px 6px 16px rgba(0, 0, 0, .42); font-size: 15px; color: #111; }
.wf-title { height: 39px; display: flex; align-items: center; padding: 0 5px 2px 10px; gap: 5px; font-family: "Open Sans", sans-serif; font-size: 15.500px; flex: none; border-bottom: 1px solid #f3f3f3; }
.wf-title .winctl { margin-left: auto; }
.wf-menu { height: 25px; flex: none; display: flex; gap: 17.300px; padding-left: 9px; line-height: 23px; border-bottom: 1px solid #999; font-family: "Open Sans", sans-serif; color: #222; }
.wf-tools { height: 34px; flex: none; background: #efefef; display: flex; align-items: center; padding: 0 0 4px 2px; }
.sep { width: 1px; height: 26px; background: #aaa; }
.style { width: 140px; height: 27px; margin: 0 3px 0 7px; border: 1px solid #a5a5a5; background: #e4e4e4; display: flex; align-items: center; justify-content: space-between; padding: 0 5px; font: 14.500px "Open Sans", sans-serif; }
.al { width: 28px; height: 27px; margin-right: 2px; display: flex; align-items: center; justify-content: center; }
.sep + .al { margin-left: 4px; }
.al svg { width: 14px; height: 15px; stroke: #222; stroke-width: 1.600; }
.al.on { background: #bcdcf4; border: 1px solid #90c8f0; }
.al + .sep { margin: 0 17px 0 1px; }
.nbwrap { height: 765px; flex: none; display: flex; overflow: hidden; }
.notebook { width: 934px; font: 22px/24px "Liberation Serif", serif; color: #111; }
.row { display: flex; padding-left: 15px; justify-content: space-between; }
.cell { width: 863px; border: 0 solid #333; overflow: hidden; }
.cell p { display: flex; }
.cell i { font-style: italic; }
.ink { border-width: 0 2px; border-color: #333; background: #f3f3f3; }
.blue { width: 905px; background: #e4f2fe; }
.green { width: 835px; background: #e7f2e9; border-width: 0 2px; border-color: #18f0f4; color: #159015; }
.mint { background: #f8fffb; border-width: 0 2px; border-color: #18f0f4; }
.pink { background: #ffeced; border-width: 0 2px; border-color: #cf9a9c; color: #a8141c; }
.rose { background: #fff8fd; border-width: 0 2px; border-color: #cf9a9c; }
.plain { background: #fff; }
.notebook sub { vertical-align: -4px; } .notebook sup { vertical-align: 9px; }
.notebook u { text-decoration: none; background: url("data:image/svg+xml,%3Csvg xmlns='http://www.w3.org/2000/svg' width='5' height='4'%3E%3Cpath d='M0 3L1.250 1 3.750 3 5 1' fill='none' stroke='%23ff5c5c' stroke-width='1.100'/%3E%3C/svg%3E") repeat-x 0 100% / 5px 4px; }
.brk { width: 6px; border: 2px solid #2d6b6e; border-left: 0; background: linear-gradient(#2d6b6e, #2d6b6e) 2px 2px / 3px 1px no-repeat; }
.brk.open { border-bottom: 0; }
.r0 { height: 2px; margin-bottom: 6px; }
.r1 { height: 43px; margin-bottom: 5px; } .r1 p { padding: 9px 0 0 10px; }
.r2 { height: 123px; margin-bottom: 2px; }
.r3 { height: 43px; margin-bottom: 3px; } .r3 p { padding: 7px 0 0 48px; }
.r4 { height: 90px; margin-bottom: 7px; line-height: 26px; } .r4 .cell { padding: 28px 0 0 37px; }
.r5 { height: 43px; margin-bottom: 5px; } .r5 p { padding: 9px 0 0 10px; }
.r6 { height: 38px; margin-bottom: 3px; } .r6 p { padding: 2px 0 0 37px; }
.eqno { margin-left: 270px; }
.r7 { height: 38px; margin-bottom: 3px; } .r7 p { padding: 3px 0 0 37px; }
.r8 { height: 93px; margin-bottom: 2px; line-height: 25.500px; } .r8 .cell { padding: 7px 0 0 37px; }
.r9 { height: 22px; } .r9 .cell { padding-left: 23px; overflow: visible; }
.delta { width: 22px; font-size: 18px; }
.r10 { height: 75px; margin-bottom: 5px; line-height: 25.500px; } .r10 .cell { padding-left: 45px; width: 880px; }
.r11 { height: 45px; margin-bottom: 4px; } .r11 p { padding: 11px 0 0 75px; }
.r12 { height: 65px; }
.grpline { width: 2px; background: #4b8385; margin-left: 8px; }
.wf-scroll { width: 20px; margin-left: auto; background: #f0f0f0; display: flex; flex-direction: column; }
.thumb { height: 179px; margin: 119px 0 auto; background: #cdcdcd; }
.wf-foot { flex: 1; background: #efefef; display: flex; justify-content: flex-end; align-items: center; line-height: 20px; font-size: 14.500px; gap: 6px; padding-bottom: 2px; }
.marker { position: absolute; left: 0; top: 0; fill: none; stroke: rgba(255, 219, 88, .55); stroke-width: 12; stroke-linejoin: round; }

/* taskbar */
.taskbar { position: absolute; inset: 1030px 0 0; display: flex; background: linear-gradient(90deg, #47222d 0, #45202b 60px, #3d1520 490px, #4a1f20 590px, #45302a 650px, #46302a 900px, #462b22 1200px, #4f2421 1370px, #37161f 1450px, #20303b 1520px, #213a40 1700px, #25393d 1920px); }
.start { width: 60px; padding: 15px 20px; }
.search { width: 430px; background: #f2f2f2; border: 1px solid #b9b9b9; display: flex; align-items: center; gap: 15px; padding-left: 14px; font: 17.500px "Open Sans", sans-serif; color: #333; }
.apps { display: flex; width: 790px; padding-left: 1px; }
.apps span { width: 62px; display: flex; align-items: center; justify-content: center; font-family: "Open Sans", sans-serif; }
.apps .cort { width: 60px; }
.apps .run { background: linear-gradient(#76b9ed, #76b9ed) center bottom / 51px 3px no-repeat; }
.apps .run.active { background: linear-gradient(#76b9ed, #76b9ed) center bottom / 62px 3px no-repeat, #6c5a54; }
.tray { font-family: "Open Sans", sans-serif; }
```
FILE: fit.js
```js
// Spreads the letters of each label so that it takes its nominal width.
document.querySelectorAll('[data-w]').forEach(function (el) {
  var target = Number(el.dataset.w);
  var spare = target - el.getBoundingClientRect().width;
  el.style.letterSpacing = spare / el.textContent.length + 'px';
});
```
